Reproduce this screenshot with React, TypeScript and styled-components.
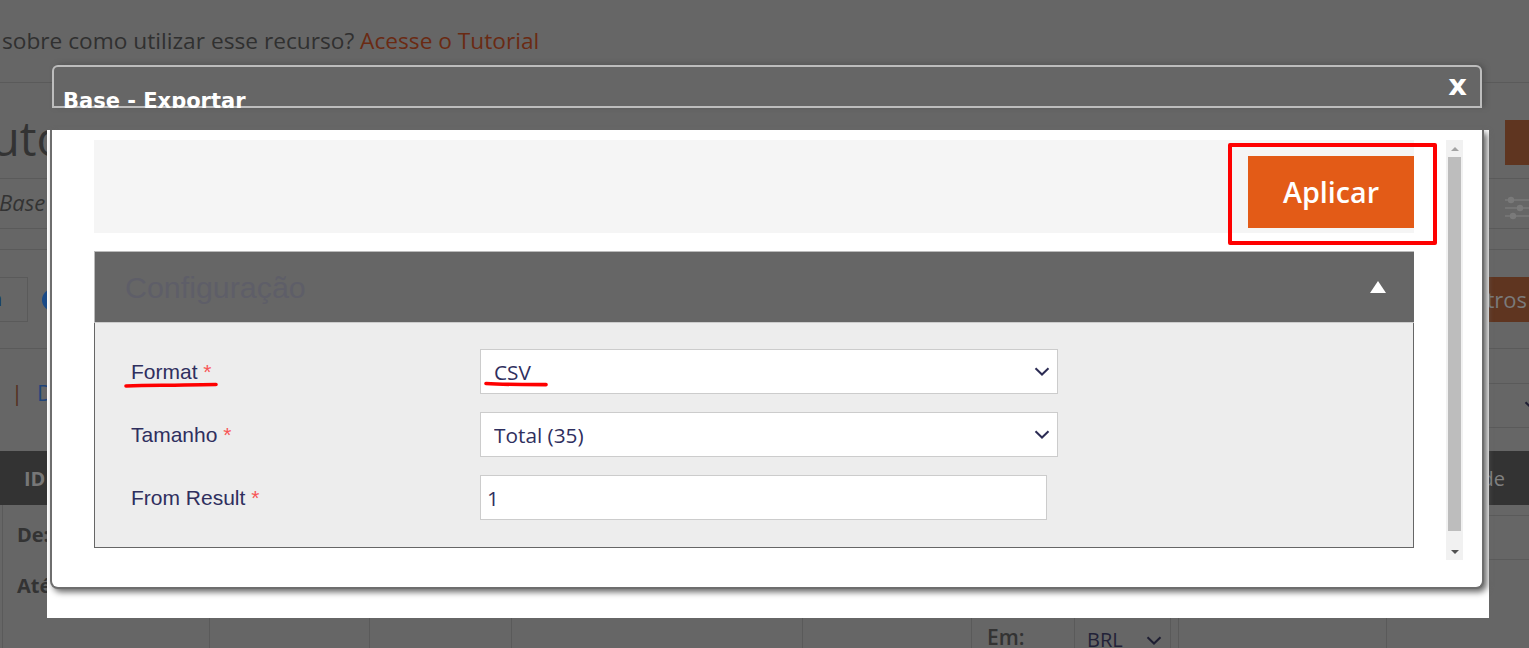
import React from "react";
import styled, { createGlobalStyle } from "styled-components";

const Global = createGlobalStyle`
  html, body { margin: 0; padding: 0; background: #666; }
  body { width: 1529px; height: 648px; overflow: hidden; font-family: "Open Sans", sans-serif; }
`;

const Page = styled.div`
  position: relative;
  width: 1529px;
  height: 648px;
  overflow: hidden;
  background: #666;
  color: #333;
`;

const Row = styled.div<{ $h: number; $line?: boolean }>`
  height: ${(p) => p.$h}px;
  box-sizing: border-box;
  border-bottom: ${(p) => (p.$line ? "1px solid #5a5a5a" : "none")};
  display: flex;
  align-items: center;
  justify-content: space-between;
`;

const Notice = styled.div`
  font-size: 22.7px;
  color: #303030;
  padding: 0 0 0 2px;
  margin-top: -2px;
  white-space: nowrap;
`;
const NoticeLink = styled.span`
  color: #6a2a13;
`;
const Title = styled.div`
  font-size: 47px;
  color: #333;
  margin: 14px 0 0 -9px;
  line-height: 60px;
  white-space: nowrap;
`;
const TitleAction = styled.div`
  width: 24px;
  height: 45px;
  margin-top: 24px;
  background: #5f3520;
`;
const Crumb = styled.div`
  font-size: 22px;
  font-style: italic;
  color: #333;
  margin: -3px 0 0 -1px;
`;
const SlidersIcon = styled.svg`
  width: 24px;
  height: 26px;
  margin-top: 8px;
  flex: none;
`;
const FilterRow = styled(Row)`
  align-items: flex-start;
  padding-top: 27px;
`;
const FilterBox = styled.div`
  box-sizing: border-box;
  width: 28px;
  height: 45px;
  border: 1px solid #5a5a5a;
  border-left: none;
  color: #12356b;
  font-size: 20px;
  line-height: 42px;
  text-indent: -10px;
  overflow: hidden;
`;
const FilterLeft = styled.div`
  display: flex;
  gap: 14px;
  align-items: center;
`;
const Radio = styled.div`
  width: 22px;
  height: 22px;
  border-radius: 50%;
  background: #1a4a87;
`;
const OrangeDim = styled.div`
  width: 60px;
  height: 45px;
  background: #5f3520;
  color: #7a7a7a;
  font-size: 22px;
  line-height: 45px;
  text-align: right;
  padding-right: 2px;
  box-sizing: border-box;
`;
const LinksBlock = styled.div`
  height: 102px;
  display: flex;
  justify-content: space-between;
`;
const LinksLeft = styled.div`
  display: flex;
  gap: 14px;
  padding: 28px 0 0 11px;
  font-size: 22px;
  line-height: 30px;
`;
const Pipe = styled.span`
  color: #54301f;
`;
const BlueLink = styled.span`
  color: #1f4478;
`;
const LinksRight = styled.div`
  width: 60px;
  display: flex;
  flex-direction: column;
`;
const RightCell = styled.div<{ $h: number }>`
  height: ${(p) => p.$h}px;
  box-sizing: border-box;
  border-bottom: 1px solid #5a5a5a;
  display: flex;
  align-items: center;
  justify-content: flex-end;
`;
const CutChevron = styled.svg`
  width: 16px;
  height: 9px;
  flex: none;
  margin-right: -11px;
`;
const TableHead = styled.div`
  height: 54px;
  background: #333;
  color: #777;
  font-size: 20px;
  font-weight: 700;
  display: flex;
  align-items: center;
  justify-content: space-between;
  padding: 0 24px;
`;
const HeadLight = styled.span`
  font-weight: 400;
  color: #808080;
`;
const TableBody = styled.div`
  display: grid;
  grid-template-columns: 3px 207px 160px 142px 291px 169px 103px 96px 8px 208px 142px;
  height: 142px;
`;
const Cell = styled.div`
  box-sizing: border-box;
  border-right: 1px solid #5a5a5a;
  position: relative;
  font-size: 20px;
  font-weight: 700;
  color: #333;
`;
const StackCell = styled(Cell)`
  border-right: none;
  display: flex;
  flex-direction: column;
`;
const CellLine = styled.div<{ $h: number }>`
  height: ${(p) => p.$h}px;
  box-sizing: border-box;
  border-bottom: 1px solid #5a5a5a;
`;
const DateLabels = styled.div`
  padding: 16px 0 0 14px;
  display: flex;
  flex-direction: column;
  gap: 24px;
  line-height: 27px;
`;
const EmLabel = styled.div`
  padding: 118px 0 0 15px;
  line-height: 28px;
  font-weight: 600;
  font-size: 21px;
`;
const BrlValue = styled.div`
  padding: 121px 0 0 12px;
  line-height: 28px;
  font-weight: 400;
  color: #222238;
  display: flex;
  align-items: center;
  gap: 23px;
`;

/* ---------- modal ---------- */
const ModalLayer = styled.div`
  position: absolute;
  left: 47px;
  top: 65px;
  width: 1442px;
  height: 553px;
  display: flex;
  flex-direction: column;
`;
const DialogHeader = styled.div`
  box-sizing: border-box;
  height: 43px;
  width: 1430px;
  margin-left: 5px;
  flex: none;
  border-radius: 6px 6px 0 0;
  background: #666;
  box-shadow: inset 0 0 0 2px #bdbdbd, 3px -1px 5px #555;
  position: relative;
  overflow: hidden;
  display: flex;
  justify-content: space-between;
  color: #fff;
  font-family: "DejaVu Sans", sans-serif;
  font-weight: 700;
`;
const DialogTitle = styled.div`
  font-size: 21px;
  line-height: 24px;
  padding: 24px 0 0 11px;
  white-space: nowrap;
`;
const Close = styled.div`
  font-size: 29px;
  line-height: 30px;
  padding: 5px 15px 0 0;
`;
const HeaderGap = styled.div`
  height: 22px;
  flex: none;
`;
const Backdrop = styled.div`
  flex: 1;
  background: #fff;
  min-height: 0;
`;
const DialogBody = styled.div`
  box-sizing: border-box;
  width: 1434px;
  height: 459px;
  margin-left: 3px;
  padding: 10px 0 0 42px;
  background: #fff;
  border: 2px solid #6e6e6e;
  border-top: none;
  border-radius: 0 0 8px 8px;
  box-shadow: 3px 3px 6px #666;
  display: flex;
  gap: 32px;
`;
const Content = styled.div`
  width: 1320px;
  flex: none;
`;
const ActionBar = styled.div`
  position: relative;
  box-sizing: border-box;
  height: 93px;
  background: #f5f5f5;
  padding-top: 16px;
  display: flex;
  justify-content: flex-end;
`;
const ApplyButton = styled.button`
  width: 166px;
  height: 72px;
  border: none;
  background: #e35b17;
  color: #fff;
  font-family: "Open Sans", sans-serif;
  font-size: 28.7px;
  font-weight: 600;
  padding: 0 0 2px;
`;
const RedBox = styled.div`
  position: absolute;
  left: 1134px;
  top: 3px;
  width: 209px;
  height: 102px;
  box-sizing: border-box;
  border: 4px solid #fe0000;
  border-radius: 2px;
`;
const Section = styled.div`
  margin-top: 18px;
`;
const SectionHead = styled.div`
  box-sizing: border-box;
  height: 72px;
  background: #666;
  border-top: 1px solid #bbb;
  border-left: 1px solid #bbb;
  border-bottom: 1px solid #ccc;
  display: flex;
  align-items: center;
  justify-content: space-between;
  padding: 0 28px 0 30px;
`;
const SectionTitle = styled.div`
  font-family: "Liberation Sans", sans-serif;
  font-size: 30.4px;
  color: #5e5e68;
`;
const Caret = styled.svg`
  width: 16px;
  height: 12px;
  flex: none;
`;
const SectionBody = styled.div`
  box-sizing: border-box;
  height: 225px;
  background: #ededed;
  border: 1px solid #666;
  border-top: none;
  padding: 26px 0 0 36px;
  display: flex;
  flex-direction: column;
  gap: 18px;
`;
const FieldRow = styled.div`
  display: flex;
  align-items: center;
  height: 45px;
`;
const Label = styled.label`
  position: relative;
  width: 349px;
  flex: none;
  font-family: "Liberation Sans", sans-serif;
  font-size: 21px;
  color: #2f2f5e;
  margin-top: 1px;
`;
const Star = styled.span`
  color: #f85555;
`;
const Scribble = styled.svg`
  position: absolute;
  overflow: visible;
`;
const LabelScribble = styled(Scribble)`
  left: -7px;
  top: 22px;
  width: 94px;
  height: 6px;
`;
const SelectWrap = styled.div`
  position: relative;
  width: 578px;
  height: 45px;
`;
const NativeSelect = styled.select`
  box-sizing: border-box;
  width: 100%;
  height: 100%;
  appearance: none;
  border: 1px solid #ccc;
  border-radius: 0;
  background: #fff;
  color: #2f2f5e;
  font-family: "Open Sans", sans-serif;
  font-size: 20.8px;
  padding: 0 0 0 13px;
  outline: none;
`;
const Chevron = styled.svg`
  position: absolute;
  right: 8px;
  top: 18px;
  width: 16px;
  height: 9px;
  pointer-events: none;
`;
const ValueScribble = styled(Scribble)`
  left: 4px;
  top: 32px;
  width: 64px;
  height: 6px;
`;
const TextField = styled.input`
  box-sizing: border-box;
  width: 567px;
  height: 45px;
  border: 1px solid #ccc;
  background: #fff;
  color: #2f2f5e;
  font-family: "Open Sans", sans-serif;
  font-size: 20.8px;
  padding: 0 0 0 6px;
  outline: none;
`;
const Scrollbar = styled.div`
  width: 17px;
  height: 420px;
  background: #f1f1f1;
  display: flex;
  flex-direction: column;
  align-items: center;
  flex: none;
`;
const ScrollArrow = styled.div<{ $down?: boolean }>`
  height: 17px;
  width: 100%;
  flex: none;
  display: flex;
  align-items: center;
  justify-content: center;
  &::before {
    content: "";
    border-left: 4px solid transparent;
    border-right: 4px solid transparent;
    ${(p) =>
      p.$down
        ? "border-top: 4px solid #505050;"
        : "border-bottom: 4px solid #a3a3a3;"}
  }
`;
const ScrollThumb = styled.div`
  width: 13px;
  height: 374px;
  background: #bdbdbd;
  flex: none;
`;
const ScrollRest = styled.div`
  flex: 1;
`;

const Down = ({ color = "#2c2c54" }: { color?: string }) => (
  <Chevron viewBox="0 0 16 9" fill="none">
    <path d="M1.5 1.2 L8 7.5 L14.5 1.2" stroke={color} strokeWidth="2" />
  </Chevron>
);

const BrlChevron = styled.svg`
  width: 16px;
  height: 9px;
  flex: none;
`;

export default function App() {
  return (
    <>
      <Global />
      <Page>
        <Row $h={83} $line>
          <Notice>
            sobre como utilizar esse recurso? <NoticeLink>Acesse o Tutorial</NoticeLink>
          </Notice>
        </Row>
        <Row $h={96} $line>
          <Title>uto</Title>
          <TitleAction />
        </Row>
        <Row $h={50} $line>
          <Crumb>Base</Crumb>
          <SlidersIcon viewBox="0 0 24 26" fill="none" stroke="#7a7a7a" strokeWidth="1.4">
            <path d="M0 5H24M0 13H24M0 21H24" />
            <circle cx="6" cy="5" r="2.5" fill="#7a7a7a" />
            <circle cx="15" cy="13" r="2.5" fill="#7a7a7a" />
            <circle cx="8" cy="21" r="2.5" fill="#7a7a7a" />
          </SlidersIcon>
        </Row>
        <Row $h={21} $line />
        <FilterRow $h={99} $line>
          <FilterLeft>
            <FilterBox>n</FilterBox>
            <Radio />
          </FilterLeft>
          <OrangeDim>tros</OrangeDim>
        </FilterRow>
        <LinksBlock>
          <LinksLeft>
            <Pipe>|</Pipe>
            <BlueLink>D</BlueLink>
          </LinksLeft>
          <LinksRight>
            <RightCell $h={35} />
            <RightCell $h={44}>
              <CutChevron viewBox="0 0 16 9" fill="none">
                <path d="M1.5 1.2 L8 7.5 L14.5 1.2" stroke="#1f1f33" strokeWidth="2" />
              </CutChevron>
            </RightCell>
          </LinksRight>
        </LinksBlock>
        <TableHead>
          <span>ID</span>
          <HeadLight>de</HeadLight>
        </TableHead>
        <TableBody>
          <Cell />
          <Cell>
            <DateLabels>
              <span>De:</span>
              <span>Até</span>
            </DateLabels>
          </Cell>
          <Cell />
          <Cell />
          <Cell />
          <Cell />
          <Cell>
            <EmLabel>Em:</EmLabel>
          </Cell>
          <Cell>
            <BrlValue>
              BRL
              <BrlChevron viewBox="0 0 16 9" fill="none">
                <path d="M1.5 1.2 L8 7.5 L14.5 1.2" stroke="#1f1f33" strokeWidth="2" />
              </BrlChevron>
            </BrlValue>
          </Cell>
          <Cell />
          <Cell />
          <StackCell>
            <CellLine $h={11} />
            <CellLine $h={44} />
          </StackCell>
        </TableBody>

        <ModalLayer>
          <DialogHeader>
            <DialogTitle>Base - Exportar</DialogTitle>
            <Close>x</Close>
          </DialogHeader>
          <HeaderGap />
          <Backdrop>
            <DialogBody>
              <Content>
                <ActionBar>
                  <ApplyButton>Aplicar</ApplyButton>
                  <RedBox />
                </ActionBar>
                <Section>
                  <SectionHead>
                    <SectionTitle>Configuração</SectionTitle>
                    <Caret viewBox="0 0 16 12">
                      <path d="M8 0 L16 12 H0 Z" fill="#fff" />
                    </Caret>
                  </SectionHead>
                  <SectionBody>
                    <FieldRow>
                      <Label>
                        Format <Star>*</Star>
                        <LabelScribble viewBox="0 0 94 6" fill="none">
                          <path
                            d="M2 4 C 25 3, 40 3.5, 60 3 S 85 2.5, 92 2.5"
                            stroke="#fe0000"
                            strokeWidth="3.6"
                            strokeLinecap="round"
                          />
                        </LabelScribble>
                      </Label>
                      <SelectWrap>
                        <NativeSelect defaultValue="CSV">
                          <option>CSV</option>
                        </NativeSelect>
                        <ValueScribble viewBox="0 0 64 6" fill="none">
                          <path
                            d="M2 2.5 C 20 3.8, 35 3.2, 62 3.6"
                            stroke="#fe0000"
                            strokeWidth="3.6"
                            strokeLinecap="round"
                          />
                        </ValueScribble>
                        <Down />
                      </SelectWrap>
                    </FieldRow>
                    <FieldRow>
                      <Label>
                        Tamanho <Star>*</Star>
                      </Label>
                      <SelectWrap>
                        <NativeSelect defaultValue="Total (35)">
                          <option>Total (35)</option>
                        </NativeSelect>
                        <Down />
                      </SelectWrap>
                    </FieldRow>
                    <FieldRow>
                      <Label>
                        From Result <Star>*</Star>
                      </Label>
                      <TextField readOnly defaultValue="1" />
                    </FieldRow>
                  </SectionBody>
                </Section>
              </Content>
              <Scrollbar>
                <ScrollArrow />
                <ScrollThumb />
                <ScrollRest />
                <ScrollArrow $down />
              </Scrollbar>
            </DialogBody>
          </Backdrop>
        </ModalLayer>
      </Page>
    </>
  );
}
